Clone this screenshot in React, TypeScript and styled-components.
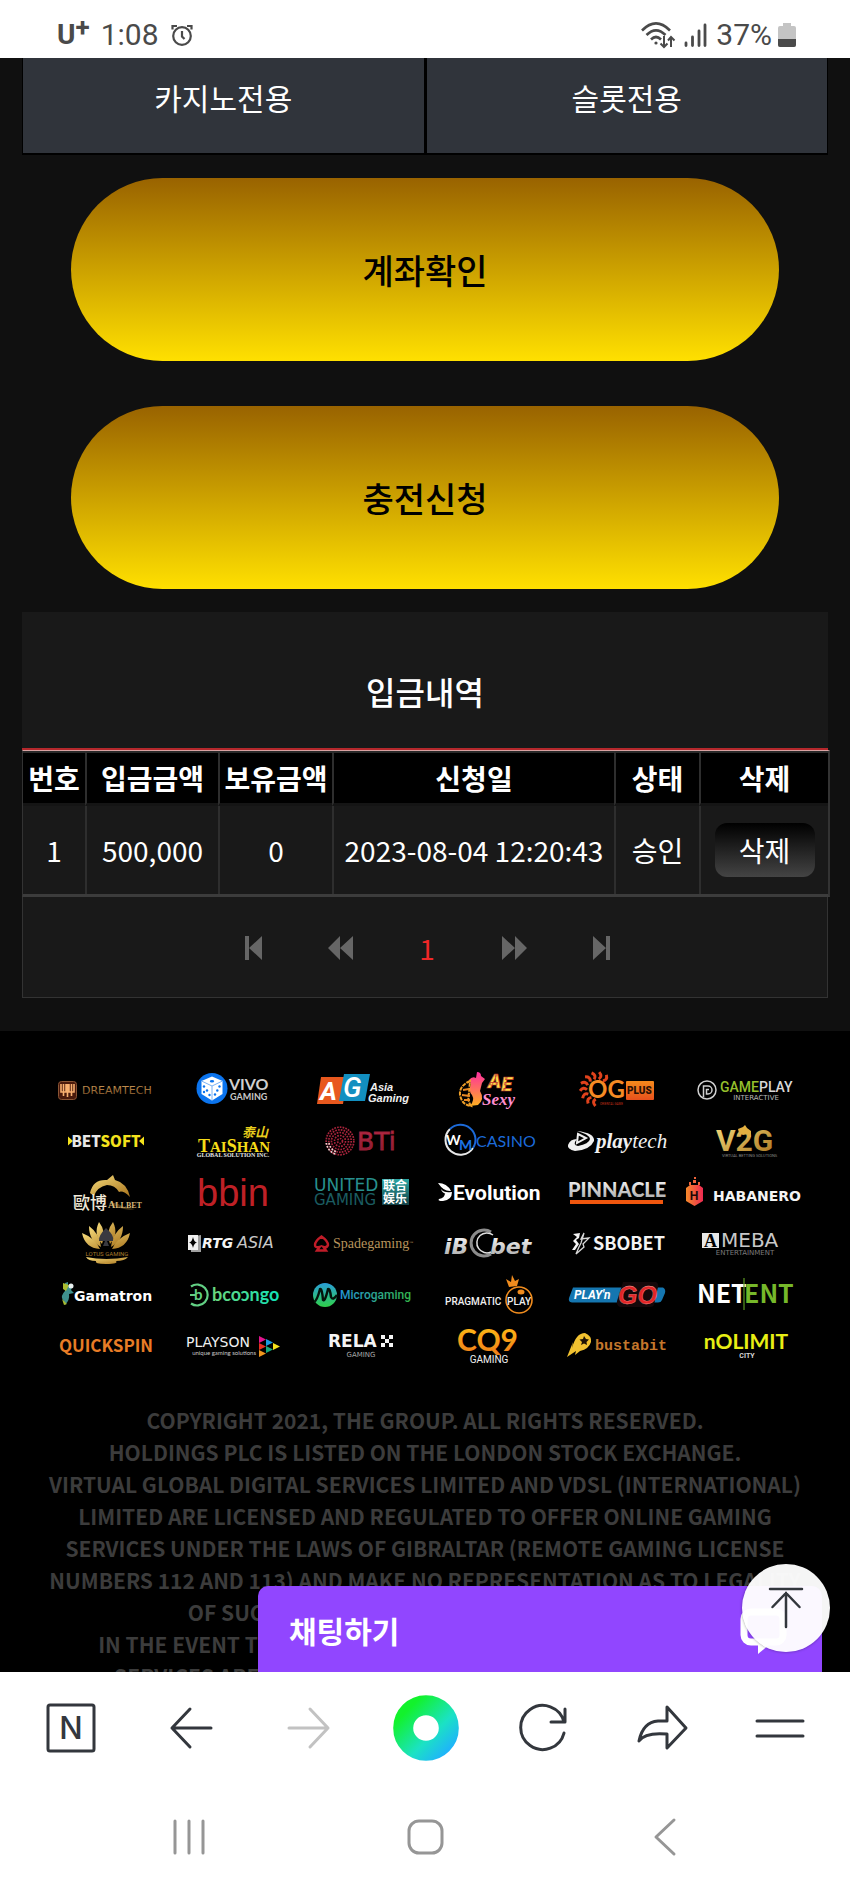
import React from 'react';
import styled, { createGlobalStyle } from 'styled-components';

const KR = "'Noto Sans CJK KR', sans-serif";
const ink = '#33373d';

const GlobalStyle = createGlobalStyle`
  * {
    box-sizing: border-box;
  }
  body {
    margin: 0;
    background: #000;
    font-family: ${KR};
  }
  button {
    margin: 0;
    padding: 0;
    border: 0;
    background: none;
    color: inherit;
    font: inherit;
    cursor: pointer;
  }
  svg {
    display: block;
    overflow: visible;
  }
`;

const Screen = styled.div`
  display: flex;
  flex-direction: column;
  height: 100vh;
  background: #101010;
`;

/* ---------- status bar ---------- */

const StatusBar = styled.header`
  display: flex;
  flex: none;
  align-items: center;
  justify-content: space-between;
  height: 58px;
  padding: 12px 54px 0 57px;
  background: #fff;
  color: #4a4a4a;
  font-family: Roboto, sans-serif;
  font-size: 30px;
  line-height: 40px;
`;

const StatusGroup = styled.div<{ gap: number }>`
  display: flex;
  align-items: center;
  gap: ${(props) => props.gap}px;
`;

const Carrier = styled.strong`
  display: flex;
  font-size: 28px;
  sup {
    font-size: 26px;
    line-height: 24px;
    vertical-align: top;
  }
`;

const StatusIcons: React.FC = () => (
  <StatusGroup gap={9}>
    <svg width="34" height="26" viewBox="0 0 34 26" fill="none" stroke="#4a4a4a" strokeWidth="2.6">
      <path d="M1 8.500 Q15 -5.500 29 8.500 M5.500 13 Q15 3.500 24.500 13 M10 17.500 Q15 12.500 20 17.500" />
      <circle cx="15" cy="21" r="1.600" fill="#4a4a4a" stroke="none" />
      <path d="M23 14 V25 M19.500 21.500 L23 25 L26.500 21.500 M30 25 V15 M27 18.500 L30 15 L33.500 18.500" strokeWidth="2" />
    </svg>
    <svg width="23" height="24" viewBox="0 0 23 24" fill="none" stroke="#4a4a4a" strokeWidth="2.8" strokeLinecap="round">
      <path d="M2 20 V22.500 M8.500 14 V22.500 M15 8 V22.500 M21 2 V22.500" />
    </svg>
    <StatusGroup gap={6}>
      <span>37%</span>
      <svg width="18" height="24" viewBox="0 0 18 24">
        <path d="M5 0 H13 V3 H16 Q18 3 18 5 V22 Q18 24 16 24 H2 Q0 24 0 22 V5 Q0 3 2 3 H5 Z" fill="#c4c4c4" />
        <path d="M0 16 H18 V22 Q18 24 16 24 H2 Q0 24 0 22 Z" fill="#4a4a4a" />
      </svg>
    </StatusGroup>
  </StatusGroup>
);

/* ---------- page ---------- */

const Viewport = styled.main`
  position: relative;
  flex: 1;
  min-height: 0;
  overflow: hidden;
`;

const Content = styled.section`
  padding: 0 22px 33px;
`;

const Tabs = styled.div`
  display: grid;
  grid-template-columns: 1fr 1fr;
  gap: 3px;
  padding: 0 1px 2px;
  background: #000;
`;

const Tab = styled.button`
  padding: 18px 0 35px;
  background: #30343b;
  color: #fff;
  font-size: 30px;
  line-height: 42px;
`;

const Actions = styled.div`
  display: flex;
  flex-direction: column;
  gap: 45px;
  padding: 23px 49px;
`;

const GoldButton = styled.button`
  height: 183px;
  border-radius: 92px;
  background: linear-gradient(#996300, #ffe000);
  color: #000;
  font-size: 34px;
  font-weight: 500;
`;

const PanelTitle = styled.h2`
  margin: 0;
  padding: 55px 0 33px;
  border-bottom: 2px solid #b5282c;
  background: #191919;
  color: #fff;
  font-size: 32px;
  font-weight: 500;
  line-height: 48px;
  text-align: center;
`;

const HistoryTable = styled.table`
  width: calc(100% + 2px);
  border-spacing: 0;
  border-top: 1px solid #dba3a3;
  border-right: 2px solid #333;
  border-bottom: 3px solid #3c3c3c;
  border-left: 1px solid #333;
  table-layout: fixed;
  background: #191919;
  color: #fff;
  font-size: 28px;
  line-height: 42px;
  text-align: center;
  white-space: nowrap;
`;

const HeadCell = styled.th`
  height: 55px;
  padding: 0;
  border-top: 2px solid #2a2a2a;
  border-bottom: 3px solid #151515;
  background: #000;
  font-weight: 700;
  & + & {
    border-left: 2px solid #2e2e2e;
  }
`;

const Cell = styled.td`
  height: 88px;
  padding: 0;
  & + & {
    border-left: 2px solid #2e2e2e;
  }
`;

const DeleteButton = styled.button`
  width: 100px;
  height: 54px;
  border-radius: 12px;
  background: linear-gradient(#000, #444);
`;

const Pager = styled.nav`
  display: flex;
  justify-content: center;
  height: 101px;
  padding: 2px 0 0 4px;
  border: 1px solid #333;
  border-top: 0;
  background: #191919;
`;

const PageButton = styled.button<{ current?: boolean }>`
  display: flex;
  align-items: center;
  justify-content: center;
  width: 87px;
  color: ${(props) => (props.current ? '#f02828' : '#666')};
  font-size: 28px;
`;

const pagerIcons = {
  first: { width: 17, d: 'M0 0 H4 V24 H0 Z M17 0 V24 L4 12 Z' },
  prev: { width: 25, d: 'M12 0 V24 L0 12 Z M25 0 V24 L12 12 Z' },
  next: { width: 25, d: 'M0 0 V24 L13 12 Z M13 0 V24 L25 12 Z' },
  last: { width: 17, d: 'M0 0 V24 L13 12 Z M13 0 H17 V24 H13 Z' },
};

const PagerIcon: React.FC<{ name: keyof typeof pagerIcons }> = ({ name }) => (
  <svg width={pagerIcons[name].width} height="24" fill="currentColor">
    <path d={pagerIcons[name].d} />
  </svg>
);

/* ---------- footer ---------- */

const Footer = styled.footer`
  padding: 32px 41px 0;
  background: #000;
`;

const LogoGrid = styled.div`
  display: grid;
  grid-template-columns: repeat(6, 1fr);
  justify-items: center;
`;

const Copyright = styled.p`
  margin: 0;
  padding: 35px 4px 0;
  color: #3c3c3c;
  font-size: 21px;
  font-weight: 700;
  line-height: 32px;
  text-align: center;
`;

const Logo: React.FC<{ name: string; children: React.ReactNode }> = ({ name, children }) => (
  <svg width="128" height="51" viewBox="0 0 128 51" role="img" aria-label={name}>
    {children}
  </svg>
);

const Word = styled.text<{ size: number; weight?: number; family?: string; slant?: boolean }>`
  font-family: ${(props) => props.family || 'Roboto, sans-serif'};
  font-size: ${(props) => props.size}px;
  font-weight: ${(props) => props.weight || 400};
  font-style: ${(props) => (props.slant ? 'italic' : 'normal')};
`;

const LATO = 'Lato, sans-serif';
const WIDE = "'DejaVu Sans', sans-serif";
const ARIAL = "'Liberation Sans', sans-serif";
const SERIF = "'Liberation Serif', serif";
const MONO = "'Liberation Mono', monospace";

const Gradients: React.FC = () => (
  <svg width="0" height="0" style={{ position: 'absolute' }} aria-hidden="true">
    <defs>
      <linearGradient id="bronze" x2="0" y2="1">
        <stop stopColor="#d09a56" />
        <stop offset="1" stopColor="#6b4420" />
      </linearGradient>
      <linearGradient id="gold" x2="1" y2="1">
        <stop stopColor="#f6dc7c" />
        <stop offset="1" stopColor="#a8731c" />
      </linearGradient>
      <linearGradient id="amber" x2="0" y2="1">
        <stop stopColor="#ffc414" />
        <stop offset="1" stopColor="#f07a1a" />
      </linearGradient>
      <linearGradient id="orange" x2="0" y2="1">
        <stop stopColor="#f58a1c" />
        <stop offset="1" stopColor="#e8501c" />
      </linearGradient>
      <linearGradient id="sunset" x2="0" y2="1">
        <stop stopColor="#ff2ea0" />
        <stop offset="1" stopColor="#ffb020" />
      </linearGradient>
      <linearGradient id="teal" x2="0" y2="1">
        <stop stopColor="#2aa6a4" />
        <stop offset="1" stopColor="#123f44" />
      </linearGradient>
      <linearGradient id="mint">
        <stop stopColor="#6ed67c" />
        <stop offset="1" stopColor="#10e2b8" />
      </linearGradient>
      <linearGradient id="micro">
        <stop stopColor="#2394d8" />
        <stop offset="1" stopColor="#35b84a" />
      </linearGradient>
      <linearGradient id="microDot" x2="0" y2="1">
        <stop stopColor="#2a9ed8" />
        <stop offset="1" stopColor="#2fd04a" />
      </linearGradient>
      <linearGradient id="silver" x2="0" y2="1">
        <stop stopColor="#fff" />
        <stop offset="1" stopColor="#a4a4a4" />
      </linearGradient>
      <linearGradient id="ember">
        <stop stopColor="#f58a2a" />
        <stop offset="1" stopColor="#ee2a52" />
      </linearGradient>
      <linearGradient id="crimson" x2="0" y2="1">
        <stop stopColor="#c02c48" />
        <stop offset="1" stopColor="#7e182c" />
      </linearGradient>
      <linearGradient id="home" x1="0.1" y1="0.1" x2="1" y2="1">
        <stop stopColor="#12f22c" />
        <stop offset="0.6" stopColor="#1be2c4" />
        <stop offset="1" stopColor="#1fb4fa" />
      </linearGradient>
    </defs>
  </svg>
);

const btiRings = [2.5, 5.5, 8.5, 11.2, 13.8];
const flameAngles = [0, 26, 52, 78, 104, 130, 156, 182, 208];

const Logos: React.FC = () => (
  <LogoGrid>
    <Logo name="Dreamtech">
      <rect x="17.500" y="18.500" width="18" height="18" rx="3" fill="#4a1a0c" stroke="#8a5434" />
      <path d="M20 21 V29 H25 V21 M28 21 V29 H33 V21 M22.500 21 V33 M26.500 21 V34 M30.500 21 V33" stroke="#f8b070" strokeWidth="1.600" fill="none" />
      <Word x="41" y="31" size={11} family={WIDE} fill="url(#bronze)">DREAMTECH</Word>
    </Logo>
    <Logo name="Vivo Gaming">
      <circle cx="43" cy="25.500" r="15.500" fill="#0b74ee" />
      <path d="M43 13.500 L53.500 18 V31 L43 37.500 L32.500 31 V18 Z" fill="#fff" />
      <path d="M32.500 18 L43 23 L53.500 18 M43 23 V37.500" stroke="#7ab2f4" fill="none" />
      <ellipse cx="43" cy="18.300" rx="2.200" ry="1.200" fill="#0b74ee" />
      <g fill="#0b74ee">
        <circle cx="35" cy="23.500" r="1.200" />
        <circle cx="38" cy="27.500" r="1.200" />
        <circle cx="35" cy="29" r="1.200" />
        <circle cx="40.500" cy="32" r="1.200" />
        <circle cx="46" cy="31.500" r="1.200" />
        <circle cx="50.500" cy="23.500" r="1.200" />
        <circle cx="48.300" cy="27.500" r="1.200" />
      </g>
      <Word x="60" y="27" size={16} weight={700} family={LATO} fill="#d0d0d0">VIVO</Word>
      <Word x="61" y="37" size={9} weight={700} family={LATO} fill="#c8c8c8">GAMING</Word>
    </Logo>
    <Logo name="Asia Gaming">
      <path d="M24 14 H50 L46 41 H20 Z" fill="#e8581e" />
      <path d="M47 11 H73 L68 38 H42 Z" fill="#128fc0" />
      <Word x="23" y="37" size={26} weight={700} slant fill="#fff">A</Word>
      <Word x="46" y="34" size={28} weight={500} slant fill="#fff">G</Word>
      <Word x="73" y="28" size={11} weight={700} slant family={ARIAL} fill="#f0f0f0">Asia</Word>
      <Word x="71" y="39" size={11} weight={700} slant family={ARIAL} fill="#f0f0f0">Gaming</Word>
    </Logo>
    <Logo name="AE Sexy">
      <path d="M52 9 Q56 9 56 13 L60 16 L57 20 L55 28 Q60 36 53 42 L45 43 Q50 37 47 32 Q43 28 46 21 L44 17 Q47 13 51 15 Z" fill="url(#sunset)" />
      <path d="M45 18 Q34 23 35 32 Q37 42 46 43 Q42 37 44 30 Z" fill="none" stroke="#f0a028" strokeWidth="2" strokeDasharray="4 1" />
      <path d="M38 27 L44 26 M37 32 L45 33 M39 37 L45 37" stroke="#e88a24" strokeWidth="2" />
      <Word x="63" y="25" size={20} weight={900} slant fill="#ffe24a" stroke="#c03a30" strokeWidth="0.7">
        A<tspan dy="3">E</tspan>
      </Word>
      <Word x="57" y="42" size={17} weight={700} slant family={SERIF} fill="#ff8ed0">Sexy</Word>
    </Logo>
    <Logo name="OG Plus">
      <g transform="translate(44 26)" fill="none" stroke="#e0421c" strokeWidth="3">
        {flameAngles.map((angle) => (
          <path key={angle} d="M-1 10 Q-5 13 -1 17" transform={`rotate(${angle + 2})`} />
        ))}
      </g>
      <Word x="35" y="35" size={24} weight={700} family={LATO} fill="#f58a24">OG</Word>
      <rect x="73" y="18" width="28" height="19" rx="1" fill="url(#orange)" />
      <Word x="74" y="31" size={10} weight={900} fill="#2a1004">PLUS</Word>
      <Word x="47" y="42" size={3} fill="#c83018">ORIENTAL GAME</Word>
    </Logo>
    <Logo name="Gameplay Interactive">
      <circle cx="26" cy="27" r="9" fill="none" stroke="#d0d0d0" strokeWidth="1.500" />
      <path d="M22.500 34 V23 H27 A4 4 0 0 1 27 31 H25.500 V26.500 H28" fill="none" stroke="#d0d0d0" strokeWidth="1.500" />
      <Word x="39" y="29" size={14} weight={500} fill="#d8d8d8">
        <tspan fill="#94bf2c">GAME</tspan>PLAY
      </Word>
      <Word x="75" y="37" size={7} family={WIDE} textAnchor="middle" fill="#b8b8b8">INTERACTIVE</Word>
    </Logo>

    <Logo name="Betsoft">
      <path d="M27 22.500 L32 27 L27 31.500 Z M103 22.500 L98 27 L103 31.500 Z" fill="#f4e21c" />
      <Word x="65" y="33" size={15} weight={900} family={KR} textAnchor="middle" fill="#e8e8e8">
        BET<tspan fill="#f4e21c">SOFT</tspan>
      </Word>
    </Logo>
    <Logo name="Taishan Global Solution Inc.">
      <Word x="73" y="23" size={13} weight={700} slant family="'Noto Sans CJK TC', sans-serif" fill="#e8cc1c">泰山</Word>
      <Word x="29" y="38" size={18} weight={700} family={SERIF} fill="#f6dc18">
        T<tspan fontSize="15">AI</tspan>S<tspan fontSize="15">HAN</tspan>
      </Word>
      <Word x="64" y="43" size={6} weight={700} family={SERIF} textAnchor="middle" fill="#e8e8e8">GLOBAL SOLUTION INC.</Word>
    </Logo>
    <Logo name="BTi">
      {btiRings.map((r) => (
        <circle key={r} cx="43" cy="27" r={r} fill="none" stroke="#a8243c" strokeWidth="1.700" strokeDasharray="1.700 1.100" />
      ))}
      <path d="M29.300 29 A13.800 13.800 0 0 0 38 40 M32 29 A11.200 11.200 0 0 0 40 38" fill="none" stroke="#f0d0d0" strokeWidth="1.700" strokeDasharray="1.700 1.500" />
      <Word x="60" y="36" size={25} family={WIDE} fill="url(#crimson)" stroke="#9c2038" strokeWidth="0.8">BTi</Word>
    </Logo>
    <Logo name="WM Casino">
      <path d="M25 15 A15 15 0 1 0 48 34" fill="none" stroke="#e8e8e8" strokeWidth="2" />
      <path d="M25 15 A15 15 0 0 1 48 34" fill="none" stroke="#1c6ad8" strokeWidth="2" />
      <Word x="21" y="31" size={14} weight={700} family={LATO} fill="#fff">
        W<tspan x="34" y="36" fill="#1c72e4">M</tspan>
      </Word>
      <Word x="51" y="33" size={16} family={LATO} fill="#1c6ad8">CASINO</Word>
    </Logo>
    <Logo name="Playtech">
      <path d="M24 17 Q42 19 41 27 Q37 36 22 37 Q14 35 15 31 Q17 25 24 25 Q19 31 25 32 Q36 30 37 25 Q36 20 24 17 Z" fill="#f0f0f0" />
      <path d="M25 20 L33 24 L24 29 Z" fill="none" stroke="#f0f0f0" strokeWidth="2" />
      <Word x="43" y="34" size={21} weight={700} slant family={SERIF} fill="#f0f0f0">
        play<tspan fontWeight="400">tech</tspan>
      </Word>
    </Logo>
    <Logo name="V2G">
      <Word x="35" y="37" size={30} weight={700} fill="url(#gold)">V2G</Word>
      <path d="M57 15 L62 13 L64 11 L66 14 L70 17 L70 23 L66 24 L67 20 L62 21 L58 19 Z" fill="#e4b040" />
      <Word x="41" y="43" size={4} fill="#8a8a8a">VIRTUAL BETTING SOLUTIONS</Word>
    </Logo>

    <Logo name="Allbet">
      <path d="M49 28 Q52 14 66 15 L72 10 L74 15 Q86 18 89 32 Q82 25 78 27 Q74 20 66 20 Q56 22 53 31 Z" fill="url(#gold)" />
      <path d="M68 38 Q84 47 94 44 Q82 43 76 38 Z" fill="#4c3a18" />
      <Word x="32" y="44" size={17} weight={500} family="'Noto Sans CJK TC', sans-serif" fill="#f0e8d8">歐博</Word>
      <Word x="67" y="43" size={10} weight={700} family={SERIF} fill="#d8b878">
        A<tspan fontSize="8">LLBET</tspan>
      </Word>
    </Logo>
    <Logo name="bbin">
      <Word x="28" y="41" size={38} family={ARIAL} fill="#bf2026">bbin</Word>
    </Logo>
    <Logo name="United Gaming">
      <Word x="17" y="26" size={17} family={WIDE} fill="#27908f">UNITED</Word>
      <Word x="17" y="40" size={15} family={WIDE} fill="#1b5c60">GAMING</Word>
      <rect x="85" y="14" width="27" height="26" fill="url(#teal)" />
      <Word x="86" y="25" size={12} weight={700} family="'Noto Sans CJK SC', sans-serif" fill="#fff">联合</Word>
      <Word x="86" y="38" size={12} weight={700} family="'Noto Sans CJK SC', sans-serif" fill="#fff">娱乐</Word>
    </Logo>
    <Logo name="Evolution">
      <path d="M13 18 Q22 18 26 26 Q19 27 13 18 Z M27 27 Q27 35 18 36 Q12 36 14 34 Q20 33 20 28 Z M16 24 Q19 28 26 27 Q18 31 16 24 Z" fill="#fff" />
      <Word x="28" y="35" size={21} weight={700} fill="#fff">Evolution</Word>
    </Logo>
    <Logo name="Pinnacle">
      <Word x="15" y="32" size={20} weight={900} family={LATO} fill="url(#silver)">PINNACLE</Word>
      <rect x="17" y="35" width="93" height="4" fill="#f0560e" />
    </Logo>
    <Logo name="Habanero">
      <path d="M5 23 L9 20 L18 20 L22 23 V36 L13.500 41 L5 36 Z" fill="url(#ember)" />
      <path d="M8 17 H10 V20 H8 Z M12 15 H15 V18 H12 Z M17 17 H19 V20 H17 Z M13 12 H15 V14 H13 Z" fill="#f0643a" />
      <Word x="13" y="35" size={12} weight={700} family={ARIAL} textAnchor="middle" fill="#200808">H</Word>
      <Word x="32" y="36" size={14} weight={700} family={WIDE} fill="#f4f4f4">HABANERO</Word>
    </Logo>

    <Logo name="Lotus Gaming">
      <g fill="url(#gold)">
        <path d="M58 6 Q66 16 61 28 Q52 18 58 6 Z M72 6 Q78 18 69 28 Q64 16 72 6 Z" />
        <path d="M48 10 Q59 18 60 31 Q48 25 48 10 Z M82 10 Q82 25 70 31 Q71 18 82 10 Z" />
        <path d="M41 17 Q54 22 59 33 Q44 32 41 17 Z M89 17 Q86 32 71 33 Q76 22 89 17 Z" />
        <path d="M45 41 Q65 45 87 41 Q84 45 75 45 Q78 48 65 48 Q53 48 55 45 Q47 45 45 41 Z" />
      </g>
      <path d="M65 12 Q74 20 72 25 L66 25 L68 30 H62 L64 25 L58 25 Q57 20 65 12 Z" fill="#3a3a40" />
      <Word x="66" y="40" size={6} textAnchor="middle" fill="#a87c2c">LOTUS GAMING</Word>
    </Logo>
    <Logo name="RTG Asia">
      <path d="M21 21 L32 19 V36 L22 36 Z" fill="#a0a0a0" />
      <rect x="19" y="19" width="10" height="15" fill="#f0f0f0" />
      <path d="M24 21 Q25 26 28 26.500 Q25 27 24 32 Q23 27 20 26.500 Q23 26 24 21 Z" fill="#000" />
      <Word x="33" y="32" size={14} weight={700} slant family={WIDE} fill="#f4f4f4">RTG</Word>
      <Word x="68" y="32" size={16} slant family={WIDE} fill="#c8c8c8">ASIA</Word>
    </Logo>
    <Logo name="Spadegaming">
      <path d="M24.500 20.500 Q31 25 31 29 Q30 32 26.500 31 L29 34.500 H20 L22.500 31 Q18 32 18 29 Q18 25 24.500 20.500 Z" fill="none" stroke="#c01c28" strokeWidth="2.400" />
      <Word x="36" y="32" size={14} family={SERIF} fill="#b8945c">
        Spadegaming<tspan fontSize="4" dy="-4">™</tspan>
      </Word>
    </Logo>
    <Logo name="iBCbet">
      <Word x="19" y="38" size={22} weight={700} slant family={WIDE} fill="url(#silver)">iB</Word>
      <path d="M66 16 A13 13 0 1 0 66 38" fill="none" stroke="#8c8c8c" strokeWidth="3" />
      <path d="M68 19 A10 10 0 1 0 66 36" fill="none" stroke="#e0e0e0" strokeWidth="1.500" />
      <Word x="65" y="38" size={22} weight={700} slant family={WIDE} fill="url(#silver)">bet</Word>
    </Logo>
    <Logo name="Sbobet">
      <path d="M20 18 L27 17 L26 22 L23 24 L26 28 L22 34 H19 L23 28 L20 25 L24 21 Z" fill="#f4f4f4" />
      <path d="M31 17 L28 23 L36 22 L30 28 L31 31 L23 38 L26 31 L28 27 Z" fill="none" stroke="#d8d8d8" strokeWidth="1.300" />
      <Word x="40" y="34" size={18} weight={700} family={KR} fill="#f4f4f4">SBOBET</Word>
    </Logo>
    <Logo name="Ameba Entertainment">
      <rect x="21" y="17" width="17" height="15" fill="#e8e8e8" />
      <Word x="23" y="31" size={18} weight={700} family={SERIF} fill="#000">A</Word>
      <Word x="40" y="31" size={20} family={WIDE} fill="#c8c8c8">MEBA</Word>
      <Word x="64" y="39" size={7} family={WIDE} textAnchor="middle" fill="#7c7c7c">ENTERTAINMENT</Word>
    </Logo>

    <Logo name="Gamatron">
      <path d="M24 16 L27 15 V19 L32 18 L30 23 L33 26 L28 27 Q29 33 24 38 L22 33 Q19 29 24 24 Z" fill="#3f8f8c" />
      <path d="M22 16 L28 18 L25 24 L22 22 Z M21 32 L26 37 L23 38 Z" fill="#a8bc30" />
      <circle cx="30" cy="19" r="2.500" fill="#e8f0f0" />
      <Word x="33" y="34" size={14} weight={700} family={WIDE} fill="#fff">Gamatron</Word>
    </Logo>
    <Logo name="Booongo">
      <path d="M22 19.500 A10.500 10.500 0 1 1 22 36.500 M21 28 H27" fill="none" stroke="#62d084" strokeWidth="2.200" />
      <Word x="25" y="33" size={15} weight={700} family={LATO} fill="#62d084">b</Word>
      <Word x="43" y="34" size={18} weight={700} family={LATO} fill="url(#mint)">bcoɔngo</Word>
    </Logo>
    <Logo name="Microgaming">
      <circle cx="28" cy="28" r="12" fill="url(#microDot)" />
      <path d="M17 35 Q20 34 23 22 Q25 21 26 33 Q28 35 31 22 Q33 21 34 30 Q36 34 40 28" fill="none" stroke="#04140c" strokeWidth="2.400" />
      <Word x="43" y="32" size={12} weight={500} fill="url(#micro)">Microgaming</Word>
    </Logo>
    <Logo name="Pragmatic Play">
      <Word x="20" y="38" size={10} weight={500} fill="#f0f0f0">PRAGMATIC</Word>
      <circle cx="94" cy="33" r="13" fill="none" stroke="#f08c1e" strokeWidth="1.600" />
      <path d="M84 20 L81 12 L86 15 L87 8 L90 14 L94 12 L92 19 Z" fill="#f08c1e" />
      <ellipse cx="96" cy="25" rx="3.500" ry="2.500" fill="#f08c1e" />
      <Word x="82" y="38" size={10} weight={500} fill="#f0f0f0">PLAY</Word>
    </Logo>
    <Logo name="Play'n GO">
      <path d="M20 20.500 H110 Q113 22 112 26 L109 33 Q108 35.500 105 35.500 H19 Q15 35 16 31 Z" fill="#1576b0" />
      <path d="M70 15 H103 Q106 17 105 20 L101 38 Q100 40 97 40 H67 Q63 38 64 34 Z" fill="#14080a" />
      <Word x="21" y="32" size={12} weight={700} slant fill="#fff">PLAY'n</Word>
      <Word x="65" y="37" size={25} weight={900} slant family={ARIAL} fill="#e22426" stroke="#f6b0a8" strokeWidth="0.3">GO</Word>
    </Logo>
    <Logo name="NetEnt">
      <Word x="16" y="36" size={25} weight={700} family={KR} fill="#fff">NET</Word>
      <path d="M63 11 V43" stroke="#5c9820" strokeWidth="1.200" />
      <Word x="63" y="36" size={25} weight={700} family={KR} fill="#76b82a">ENT</Word>
    </Logo>

    <Logo name="Quickspin">
      <Word x="65" y="34" size={17} weight={700} family={KR} textAnchor="middle" fill="#e87c26">QUICKSPIN</Word>
    </Logo>
    <Logo name="Playson">
      <Word x="17" y="29" size={14} family={WIDE} fill="#f0f0f0">PLAYSON</Word>
      <Word x="87" y="37" size={6} family={LATO} textAnchor="end" fill="#c8c8c8">unique gaming solutions</Word>
      <path d="M90 18 L97 21.500 L90 25 Z" fill="#e0148c" />
      <path d="M97 21 L104 24.500 L97 28 Z" fill="#1a9ae0" />
      <path d="M90 25 L97 28.500 L90 32 Z" fill="#e83020" />
      <path d="M104 25 L111 28.500 L104 32 Z" fill="#f4e01c" />
      <path d="M97 28 L104 31.500 L97 35 Z" fill="#18a878" />
      <path d="M90 32 L97 35.500 L90 39 Z" fill="#f0961c" />
    </Logo>
    <Logo name="Relax Gaming">
      <Word x="31" y="29" size={17} weight={700} family={WIDE} fill="#f4f4f4">RELA</Word>
      <path d="M84 17 H88 V21 H84 Z M92 17 H96 V21 H92 Z M88 21 H92 V25 H88 Z M84 25 H88 V29 H84 Z M92 25 H96 V29 H92 Z" fill="#f4f4f4" />
      <Word x="64" y="39" size={7} family={WIDE} textAnchor="middle" fill="#a8a8a8">GAMING</Word>
    </Logo>
    <Logo name="CQ9 Gaming">
      <Word x="32" y="33" size={30} weight={700} family={LATO} fill="url(#amber)">CQ9</Word>
      <Word x="64" y="45" size={10} textAnchor="middle" fill="#f0f0f0">GAMING</Word>
    </Logo>
    <Logo name="Bustabit">
      <path d="M14 39 L20 24 L19 30 Q23 15 32 15 Q39 18 38 24 Q36 31 27 33 L22 37 L23 33 Z" fill="#f2c230" />
      <path d="M31 18 L33 21 L36 21.500 L33.500 24 L34 27 L31 25.500 L28 27 L29 24 L26.500 21.500 L30 21 Z" fill="#201404" />
      <Word x="42" y="32" size={15} weight={700} family={MONO} fill="#c4772c">bustabit</Word>
    </Logo>
    <Logo name="Nolimit City">
      <Word x="65" y="31" size={21} weight={700} family={LATO} textAnchor="middle" fill="#e8ee14">nOLIMIT</Word>
      <Word x="66" y="40" size={7} weight={700} textAnchor="middle" fill="#d8d8d8">CITY</Word>
    </Logo>
  </LogoGrid>
);

/* ---------- floating controls ---------- */

const ChatBar = styled.button`
  position: absolute;
  right: 28px;
  bottom: 0;
  display: flex;
  align-items: center;
  justify-content: space-between;
  width: 564px;
  max-width: 90%;
  height: 86px;
  padding: 2px 35px 0 31px;
  border-radius: 10px 10px 0 0;
  background: #9146ff;
  color: #fff;
  font-size: 30px;
  font-weight: 700;
`;

const TopButton = styled.button`
  position: absolute;
  right: 20px;
  bottom: 20px;
  display: flex;
  align-items: center;
  justify-content: center;
  width: 88px;
  height: 88px;
  border-radius: 50%;
  background: rgba(255, 255, 255, 0.96);
  box-shadow: 0 0 3px rgba(0, 0, 0, 0.4);
`;

/* ---------- browser and system bars ---------- */

const BrowserBar = styled.nav`
  display: flex;
  flex: none;
  height: 109px;
  padding: 2px 11px 0 12px;
  background: #fff;
`;

const SystemBar = styled.nav`
  display: flex;
  flex: none;
  height: 108px;
  padding: 3px 70px 0 71px;
  background: #fff;
`;

const BarButton = styled.button<{ tone?: string }>`
  display: flex;
  flex: 1;
  align-items: center;
  justify-content: center;
  color: ${(props) => props.tone || ink};
`;

const LineIcon = styled.svg`
  width: 50px;
  height: 50px;
  fill: none;
  stroke: currentColor;
  stroke-width: 3px;
  stroke-linecap: round;
  stroke-linejoin: round;
`;

const App: React.FC = () => {
  return (
    <Screen>
      <GlobalStyle />
      <Gradients />
      <StatusBar>
        <StatusGroup gap={11}>
          <Carrier>
            U<sup>+</sup>
          </Carrier>
          <span>1:08</span>
          <svg width="22" height="22" viewBox="0 0 22 22" fill="none" stroke="#4a4a4a" strokeWidth="2.200">
            <circle cx="12" cy="12" r="8.800" />
            <path d="M12 7 V12.500 L14.500 15 M2.500 5.500 V2 H7 M17 2 H21.500 V5.500" />
          </svg>
        </StatusGroup>
        <StatusIcons />
      </StatusBar>

      <Viewport>
        <Content>
          <Tabs>
            <Tab type="button">카지노전용</Tab>
            <Tab type="button">슬롯전용</Tab>
          </Tabs>
          <Actions>
            <GoldButton type="button">계좌확인</GoldButton>
            <GoldButton type="button">충전신청</GoldButton>
          </Actions>
          <PanelTitle>입금내역</PanelTitle>
          <HistoryTable>
            <colgroup>
              <col width="62" />
              <col width="133" />
              <col width="114" />
              <col />
              <col width="85" />
              <col width="129" />
            </colgroup>
            <thead>
              <tr>
                <HeadCell>번호</HeadCell>
                <HeadCell>입금금액</HeadCell>
                <HeadCell>보유금액</HeadCell>
                <HeadCell>신청일</HeadCell>
                <HeadCell>상태</HeadCell>
                <HeadCell>삭제</HeadCell>
              </tr>
            </thead>
            <tbody>
              <tr>
                <Cell>1</Cell>
                <Cell>500,000</Cell>
                <Cell>0</Cell>
                <Cell>2023-08-04 12:20:43</Cell>
                <Cell>승인</Cell>
                <Cell>
                  <DeleteButton type="button">삭제</DeleteButton>
                </Cell>
              </tr>
            </tbody>
          </HistoryTable>
          <Pager>
            <PageButton type="button" aria-label="처음">
              <PagerIcon name="first" />
            </PageButton>
            <PageButton type="button" aria-label="이전">
              <PagerIcon name="prev" />
            </PageButton>
            <PageButton type="button" current>
              1
            </PageButton>
            <PageButton type="button" aria-label="다음">
              <PagerIcon name="next" />
            </PageButton>
            <PageButton type="button" aria-label="마지막">
              <PagerIcon name="last" />
            </PageButton>
          </Pager>
        </Content>

        <Footer>
          <Logos />
          <Copyright>
            COPYRIGHT 2021, THE GROUP. ALL RIGHTS RESERVED.
            <br />
            HOLDINGS PLC IS LISTED ON THE LONDON STOCK EXCHANGE.
            <br />
            VIRTUAL GLOBAL DIGITAL SERVICES LIMITED AND VDSL (INTERNATIONAL) LIMITED ARE LICENSED AND REGULATED
            TO OFFER ONLINE GAMING SERVICES UNDER THE LAWS OF GIBRALTAR (REMOTE GAMING LICENSE NUMBERS 112 AND
            113) AND MAKE NO REPRESENTATION AS TO LEGALITY OF SUCH SERVICES IN OTHER JURISDICTIONS.
            <br />
            IN THE EVENT THAT ANY OF THE GAMES OR RELATED TO ONLINE
            <br />
            SERVICES ARE NOT PERMITTED WHERE YOU ARE DOMICILED.
          </Copyright>
        </Footer>

        <ChatBar type="button">
          채팅하기
          <svg width="47" height="48" viewBox="0 0 47 48" aria-hidden="true">
            <rect x="4" y="6" width="39" height="30" rx="7" fill="none" stroke="#fff" strokeWidth="7" />
            <path d="M18 38 H30 L18 48 Z" fill="#fff" />
          </svg>
        </ChatBar>
        <TopButton type="button" aria-label="맨 위로">
          <svg width="34" height="42" viewBox="0 0 34 42" fill="none" stroke={ink} strokeWidth="2.500" strokeLinecap="round">
            <path d="M1 2 H33 M17 6 V40 M3.500 20 L17 6 L30.500 20" />
          </svg>
        </TopButton>
      </Viewport>

      <BrowserBar>
        <BarButton type="button" aria-label="네이버">
          <LineIcon viewBox="0 0 50 50">
            <rect x="2" y="2" width="46" height="46" rx="2" />
            <Word x="25" y="36" size={31} weight={500} family="Inter, sans-serif" textAnchor="middle" fill={ink} stroke="none">
              N
            </Word>
          </LineIcon>
        </BarButton>
        <BarButton type="button" aria-label="뒤로">
          <LineIcon viewBox="0 0 50 50">
            <path d="M47 25 H8 M26 6 L8 25 L26 44" />
          </LineIcon>
        </BarButton>
        <BarButton type="button" aria-label="앞으로" tone="#c2c2c2">
          <LineIcon viewBox="0 0 50 50">
            <path d="M7 25 H46 M28 6 L46 25 L28 44" />
          </LineIcon>
        </BarButton>
        <BarButton type="button" aria-label="홈">
          <svg width="66" height="66" viewBox="0 0 66 66">
            <circle cx="34" cy="33" r="22.800" fill="none" stroke="url(#home)" strokeWidth="20" />
          </svg>
        </BarButton>
        <BarButton type="button" aria-label="새로고침">
          <LineIcon viewBox="0 0 50 50">
            <path d="M45 30 A22 22 0 1 1 45 19 M46 6 V19 H32" />
          </LineIcon>
        </BarButton>
        <BarButton type="button" aria-label="공유">
          <LineIcon viewBox="0 0 50 50">
            <path d="M30 4 L49 25 L30 45 V31 Q8 29 2 38 Q6 19 21 18 H30 Z" />
          </LineIcon>
        </BarButton>
        <BarButton type="button" aria-label="메뉴">
          <LineIcon viewBox="0 0 50 50">
            <path d="M2 18 H48 M2 33 H48" />
          </LineIcon>
        </BarButton>
      </BrowserBar>
      <SystemBar>
        <BarButton type="button" aria-label="최근 앱" tone="#969696">
          <LineIcon viewBox="0 0 50 50">
            <path d="M11 9 V41 M25 9 V41 M39 9 V41" />
          </LineIcon>
        </BarButton>
        <BarButton type="button" aria-label="홈 화면" tone="#969696">
          <LineIcon viewBox="0 0 50 50">
            <rect x="9" y="9" width="33" height="32" rx="10" />
          </LineIcon>
        </BarButton>
        <BarButton type="button" aria-label="이전 화면" tone="#969696">
          <LineIcon viewBox="0 0 50 50">
            <path d="M37 8 L19 25 L37 42" />
          </LineIcon>
        </BarButton>
      </SystemBar>
    </Screen>
  );
};

export default App;
